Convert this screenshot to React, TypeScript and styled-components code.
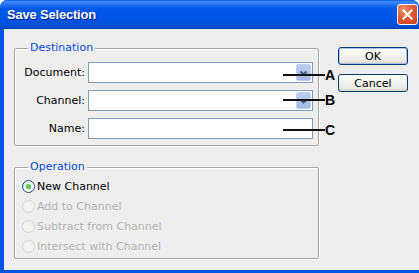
import styled, { createGlobalStyle } from 'styled-components'

const GlobalStyle = createGlobalStyle`
  html, body {
    margin: 0;
    padding: 0;
    background: #ffffff;
  }
  body {
    width: 419px;
    height: 273px;
    overflow: hidden;
    font-family: 'DejaVu Sans', Verdana, sans-serif;
    font-size: 11px;
  }
`

const Dialog = () => {
  return (
    <Window>
      <GlobalStyle />
      <TitleBar>
        <Title>Save Selection</Title>
        <CloseButton aria-label="Close">
          <svg width="11" height="11" viewBox="0 0 11 11">
            <path d="M1.5 1.5 L9.5 9.5 M9.5 1.5 L1.5 9.5" stroke="#fff" strokeWidth="2.2" strokeLinecap="square" />
          </svg>
        </CloseButton>
      </TitleBar>

      <Body>
        <Groups>
          <Group>
            <Legend>Destination</Legend>
            <FieldRows>
              <FieldRow>
                <Label>Document:</Label>
                <Combo>
                  <DropButton>
                    <Chevron />
                  </DropButton>
                </Combo>
                <Callout $offset={2}>
                  <CalloutLine />
                  <CalloutLetter>A</CalloutLetter>
                </Callout>
              </FieldRow>
              <FieldRow>
                <Label>Channel:</Label>
                <Combo>
                  <DropButton>
                    <Chevron />
                  </DropButton>
                </Combo>
                <Callout $offset={-1}>
                  <CalloutLine />
                  <CalloutLetter>B</CalloutLetter>
                </Callout>
              </FieldRow>
              <FieldRow>
                <Label>Name:</Label>
                <Combo />
                <Callout $offset={1}>
                  <CalloutLine />
                  <CalloutLetter>C</CalloutLetter>
                </Callout>
              </FieldRow>
            </FieldRows>
          </Group>

          <Group $spaced>
            <Legend>Operation</Legend>
            <RadioList>
              <RadioRow>
                <Radio $checked />
                <RadioText>New Channel</RadioText>
              </RadioRow>
              <RadioRow $disabled>
                <Radio $disabled />
                <RadioText>Add to Channel</RadioText>
              </RadioRow>
              <RadioRow $disabled>
                <Radio $disabled />
                <RadioText>Subtract from Channel</RadioText>
              </RadioRow>
              <RadioRow $disabled>
                <Radio $disabled />
                <RadioText>Intersect with Channel</RadioText>
              </RadioRow>
            </RadioList>
          </Group>
        </Groups>

        <Buttons>
          <PushButton $default>OK</PushButton>
          <PushButton>Cancel</PushButton>
        </Buttons>
      </Body>
    </Window>
  )
}

// little "v" on the combo box buttons
const Chevron = () => (
  <svg width="13" height="16" viewBox="0 0 13 16">
    <path d="M3.5 6.5 L6.5 9.5 L9.5 6.5" stroke="#4a5f8a" strokeWidth="2.2" fill="none" />
  </svg>
)

export default function App() {
  return <Dialog />
}

const Window = styled.div`
  width: 419px;
  height: 273px;
  display: flex;
  flex-direction: column;
  background: #0054e3;
  border-radius: 7px 7px 0 0;
  overflow: hidden;
`

const TitleBar = styled.div`
  height: 29px;
  flex: none;
  display: flex;
  align-items: center;
  justify-content: space-between;
  padding: 0 1px 0 7px;
  background: linear-gradient(
    #0a5ae0 0%,
    #3a8cf8 6%,
    #2a78f0 14%,
    #0058e8 30%,
    #0054e3 70%,
    #0050d8 90%,
    #003fb8 100%
  );
`

const Title = styled.span`
  font-family: 'Liberation Sans', Arial, sans-serif;
  font-weight: bold;
  font-size: 13px;
  color: #ffffff;
  text-shadow: 1px 1px 0 #0a1e80;
  letter-spacing: -0.2px;
`

const CloseButton = styled.div`
  width: 21px;
  height: 21px;
  box-sizing: border-box;
  border: 1px solid #ffffff;
  border-radius: 3px;
  background: radial-gradient(circle at 30% 25%, #f09070 0%, #e05a32 45%, #c8401c 100%);
  display: flex;
  align-items: center;
  justify-content: center;
`

const Body = styled.div`
  flex: 1;
  display: flex;
  align-items: flex-start;
  background: #efeeee;
  margin-left: 4px;
  margin-bottom: 3px;
  padding: 12px 0 0 10px;
`

const Groups = styled.div`
  display: flex;
  flex-direction: column;
`

const Group = styled.fieldset<{ $spaced?: boolean }>`
  width: 305px;
  box-sizing: border-box;
  margin: ${(p) => (p.$spaced ? '14px' : '0')} 0 0 0;
  padding: 0;
  border: 1px solid #a4a4a4;
  border-radius: 2px;
  box-shadow: inset 1px 1px 0 #ffffff, 1px 1px 0 #ffffff;
  min-inline-size: 0;
`

const Legend = styled.legend`
  margin-left: 13px;
  padding: 0 2px;
  line-height: 14px;
  color: #0046d5;
`

const FieldRows = styled.div`
  display: flex;
  flex-direction: column;
  gap: 7px;
  padding: 7px 5px 6px 0;
`

const FieldRow = styled.div`
  position: relative;
  display: flex;
  align-items: center;
  gap: 3px;
  height: 21px;
`

const Label = styled.span`
  width: 70px;
  text-align: right;
  color: #000000;
`

const Combo = styled.div`
  width: 225px;
  height: 21px;
  box-sizing: border-box;
  border: 1px solid #7f9db9;
  background: #ffffff;
  display: flex;
  justify-content: flex-end;
  align-items: stretch;
  padding: 1px 1px 1px 0;
`

const DropButton = styled.div`
  width: 15px;
  box-sizing: border-box;
  border-radius: 2px;
  border: 1px solid #c0d0f2;
  background: linear-gradient(#bccdf2, #adc2ec 60%, #a2b8e6);
  display: flex;
  align-items: center;
  justify-content: center;
`

const Callout = styled.div<{ $offset: number }>`
  position: absolute;
  left: 268px;
  top: 50%;
  transform: translateY(calc(-50% + ${(p) => p.$offset}px));
  display: flex;
  align-items: center;
`

const CalloutLine = styled.div`
  width: 42px;
  height: 2px;
  background: #111111;
`

const CalloutLetter = styled.span`
  font-family: 'Liberation Sans', Arial, sans-serif;
  font-weight: bold;
  font-size: 14px;
  line-height: 14px;
  color: #000000;
`

const RadioList = styled.div`
  display: flex;
  flex-direction: column;
  padding: 2px 0 2px 7px;
`

const RadioRow = styled.div<{ $disabled?: boolean }>`
  height: 20px;
  display: flex;
  align-items: center;
  gap: 2px;
  color: ${(p) => (p.$disabled ? '#b3b3b3' : '#000000')};
`

const Radio = styled.span<{ $checked?: boolean; $disabled?: boolean }>`
  width: 13px;
  height: 13px;
  box-sizing: border-box;
  border-radius: 50%;
  border: 1px solid ${(p) => (p.$disabled ? '#d4d3cc' : '#1c5180')};
  background: ${(p) =>
    p.$disabled ? '#f2f2f0' : 'linear-gradient(135deg, #dcdcd6, #ffffff 70%)'};
  display: flex;
  align-items: center;
  justify-content: center;

  &::after {
    content: '';
    display: ${(p) => (p.$checked ? 'block' : 'none')};
    width: 5px;
    height: 5px;
    border-radius: 50%;
    background: radial-gradient(circle at 40% 35%, #6ee06e, #21a121);
  }
`

const RadioText = styled.span``

const Buttons = styled.div`
  display: flex;
  flex-direction: column;
  gap: 9px;
  margin-left: 19px;
  padding-top: 6px;
`

const PushButton = styled.div<{ $default?: boolean }>`
  width: 70px;
  height: 18px;
  box-sizing: border-box;
  border: 1px solid #003c74;
  border-radius: 3px;
  background: linear-gradient(#ffffff, #f3f3ef 40%, #ecebe6 80%, #d6d0c5);
  box-shadow: ${(p) => (p.$default ? 'inset 0 0 0 1px #a8c4f0' : 'none')};
  display: flex;
  align-items: center;
  justify-content: center;
  color: #000000;
  line-height: 1;
`
